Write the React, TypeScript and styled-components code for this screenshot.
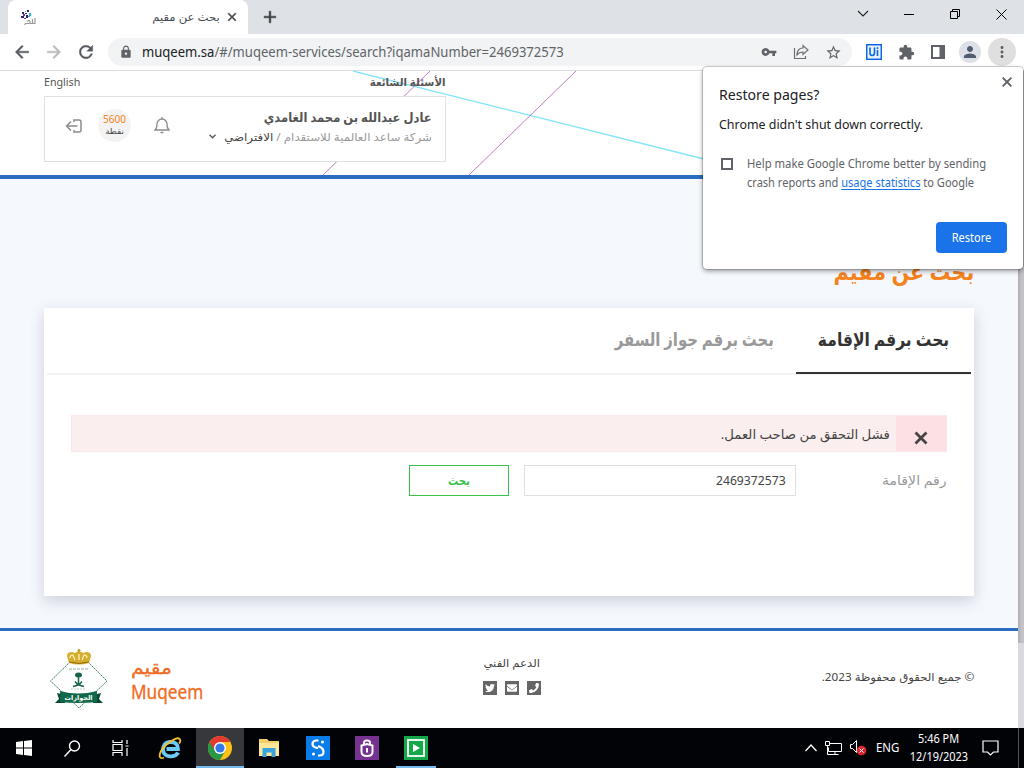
import React from "react";
import styled, { createGlobalStyle } from "styled-components";
import {
  MdArrowBack, MdArrowForward, MdRefresh, MdLock, MdVpnKey, MdStarBorder,
  MdExtension, MdPerson, MdMoreVert, MdClose, MdAdd,
} from "react-icons/md";
import { FaTwitter, FaEnvelope, FaPhone } from "react-icons/fa";

const Global = createGlobalStyle`
  *, *::before, *::after { box-sizing: border-box; }
  html, body { margin: 0; padding: 0; overflow: hidden; }
  body { font-family: "Noto Sans", "DejaVu Sans", sans-serif; color: #444; }
  button, input { font: inherit; }
  svg { display: block; flex: none; }
`;

const Screen = styled.div`
  position: relative;
  display: flex;
  flex-direction: column;
  width: 1024px;
  height: 768px;
  overflow: hidden;
  background: #fff;
`;

/* One line of text; $sx condenses or widens the letters, $from is the edge that stays put. */
const Line = styled.span<{ $size: number; $sx?: number; $color?: string; $bold?: boolean; $rtl?: boolean; $lh?: number; $from?: "left" | "right" | "center" }>`
  display: inline-flex;
  flex: none;
  direction: ${(p) => (p.$rtl ? "rtl" : "ltr")};
  font-size: ${(p) => p.$size}px;
  line-height: ${(p) => p.$lh ?? 20}px;
  font-weight: ${(p) => (p.$bold ? 700 : 400)};
  color: ${(p) => p.$color ?? "inherit"};
  white-space: pre;
  transform: scaleX(${(p) => p.$sx ?? 1});
  transform-origin: ${(p) => p.$from ?? (p.$rtl ? "right" : "left")} center;
`;

/* Browser chrome */
const TabStrip = styled.div`
  display: flex;
  flex: none;
  height: 34px;
  background: #dee1e6;
`;
const Tab = styled.div`
  display: flex;
  align-items: center;
  justify-content: space-between;
  width: 240px;
  margin-left: 8px;
  padding: 0 9px 0 12px;
  border-radius: 8px 8px 0 0;
  background: #fff;
  color: #45494d;
`;
const TabEnd = styled.div`
  display: flex;
  align-items: center;
  gap: 5px;
`;
const BoldClose = styled(MdClose)`
  path:not([fill="none"]) { stroke: currentColor; stroke-width: 1px; }
`;
const NewTab = styled.div`
  display: flex;
  align-items: center;
  margin-left: 12px;
  color: #3c4043;
  path:not([fill="none"]) { stroke: currentColor; stroke-width: 0.6px; }
`;
const WindowControls = styled.div`
  display: flex;
  align-items: center;
  margin-left: auto;
  height: 28px;
`;
const WindowButton = styled.div`
  display: flex;
  justify-content: center;
  width: 46px;
`;
const Toolbar = styled.div`
  display: flex;
  flex: none;
  align-items: center;
  height: 37px;
  padding: 0 8px 0 12px;
  border-bottom: 1px solid #dadce0;
  color: #5f6368;
`;
const NavIcons = styled.div`
  display: flex;
  gap: 12px;
  color: #55595e;
  path:not([fill="none"]) { stroke: currentColor; stroke-width: 0.5px; }
`;
const Omnibox = styled.div`
  display: flex;
  align-items: center;
  width: 744px;
  height: 28px;
  margin-left: 12px;
  padding: 0 10px 0 11px;
  border-radius: 14px;
  background: #f1f3f4;
`;
const Url = styled.div`
  display: flex;
  width: 430px;
  margin-left: 9px;
  b { font-weight: 400; color: #202124; }
`;
const OmniActions = styled.div`
  display: flex;
  align-items: center;
  gap: 16px;
  margin-left: auto;
`;
const ToolActions = styled.div`
  display: flex;
  align-items: center;
  margin-left: 14px;
  gap: 16px;
`;
const Avatar = styled.div`
  display: grid;
  place-items: center;
  width: 22px;
  height: 22px;
  margin-left: -2px;
  border-radius: 50%;
  background: #dde0e7;
  color: #525c70;
`;
const MenuDots = styled.div`
  display: grid;
  place-items: center;
  width: 28px;
  height: 28px;
  margin-left: -9px;
  border-radius: 50%;
  background: #dfdfdf;
`;

/* Web page */
const Viewport = styled.div`
  display: flex;
  flex: none;
  height: 657px;
`;
const Page = styled.div`
  display: flex;
  flex-direction: column;
  width: 1018px;
  background: #f5f8fd;
`;
const Scrollbar = styled.div`
  width: 6px;
  background: #d9dade;
`;
const Thumb = styled.div`
  height: 572px;
  background: linear-gradient(90deg, #aeaeb2, #c2c2c7 60%);
`;
const Header = styled.header`
  position: relative;
  height: 108px;
  flex: none;
  padding: 1px 0 0 44px;
  border-bottom: 4px solid #2a6cbf;
  background: #fff;
`;
const HeaderLines = styled.svg`
  position: absolute;
  top: 0;
  left: 320px;
`;
const HeaderColumn = styled.div`
  position: relative;
  width: 402px;
`;
const TopLinks = styled.div`
  display: flex;
  align-items: center;
  justify-content: space-between;
  height: 24px;
  padding-bottom: 4px;
  color: #555;
`;
const ProfileCard = styled.div`
  display: flex;
  align-items: center;
  height: 66px;
  padding: 0 13px 0 20px;
  border: 1px solid #e0e0e0;
  background: #fff;
  color: #999;
`;
const ProfileIcons = styled.div`
  display: flex;
  align-items: center;
  gap: 15px;
  padding-bottom: 7px;
`;
const Points = styled.div`
  display: flex;
  flex-direction: column;
  align-items: center;
  width: 33px;
  height: 33px;
  padding-top: 4px;
  border-radius: 50%;
  background: #f3f3f3;
`;
const Bell = styled.svg`
  margin-left: 8px;
`;
const ProfileText = styled.div`
  display: flex;
  flex-direction: column;
  align-items: flex-end;
  margin-left: auto;
  padding-bottom: 5px;
`;
const Company = styled.div`
  display: flex;
  align-items: center;
  gap: 23px;
  b { font-weight: 400; color: #444; }
`;
const Main = styled.main`
  display: flex;
  flex-direction: column;
  height: 449px;
  padding: 76px 44px 0;
`;
const PageTitle = styled.h1`
  display: flex;
  justify-content: flex-end;
  height: 53px;
  margin: 0;
  line-height: 32px;
`;
const Card = styled.section`
  height: 288px;
  padding: 0 3px;
  background: #fff;
  box-shadow: 0 5px 14px rgba(60, 70, 90, 0.22);
`;
const Tabs = styled.div`
  display: flex;
  flex-direction: row-reverse;
  height: 67px;
  border-bottom: 2px solid #f2f2f2;
`;
const SearchTab = styled.div<{ $active?: boolean }>`
  height: 66px;
  width: ${(p) => (p.$active ? 175 : 205)}px;
  padding: 15px 22px 0;
  text-align: right;
  direction: rtl;
  border-bottom: ${(p) => (p.$active ? "2px solid #333" : "none")};
`;
const Body = styled.div`
  padding: 40px 24px 0;
`;
const Alert = styled.div`
  display: flex;
  flex-direction: row-reverse;
  align-items: center;
  height: 37px;
  border: 1px solid #fae7e8;
  background: #faeeee;
`;
const AlertClose = styled.div`
  display: grid;
  place-items: center;
  width: 50px;
  height: 35px;
  padding-top: 9px;
  margin-left: 6px;
  background: #fde0e4;
`;
const FormRow = styled.div`
  display: flex;
  flex-direction: row-reverse;
  align-items: center;
  margin-top: 13px;
`;
const Label = styled.label`
  display: flex;
  justify-content: flex-end;
  width: 151px;
  padding-bottom: 1px;
`;
const Field = styled.div`
  display: flex;
  align-items: center;
  justify-content: flex-end;
  width: 272px;
  height: 31px;
  padding-right: 9px;
  border: 1px solid #e0e0e0;
`;
const SearchButton = styled.button`
  display: flex;
  align-items: center;
  justify-content: center;
  width: 100px;
  height: 31px;
  margin-right: 15px;
  padding: 0;
  border: 1px solid #3cc14b;
  background: #fff;
`;
const Footer = styled.footer`
  display: flex;
  flex: 1;
  justify-content: space-between;
  padding: 17px 44px 0 49px;
  border-top: 3px solid #2a6cbf;
  background: #fff;
`;
const Brand = styled.div`
  display: flex;
  gap: 23px;
  width: 300px;
`;
const BrandText = styled.div`
  display: flex;
  flex-direction: column;
  align-items: flex-start;
  padding-top: 7px;
  -webkit-text-stroke: 0.3px #f26a21;
`;
const Support = styled.div`
  display: flex;
  flex-direction: column;
  align-items: center;
  gap: 8px;
  padding: 5px 0 0 1px;
`;
const Socials = styled.div`
  display: flex;
  gap: 8px;
`;
const Social = styled.span`
  display: grid;
  place-items: center;
  width: 14px;
  height: 14px;
  background: #666;
  color: #fff;
`;
const Copyright = styled.div`
  display: flex;
  justify-content: flex-end;
  width: 300px;
  padding-top: 19px;
`;

/* Restore dialog floating above the page */
const Popup = styled.div`
  position: absolute;
  top: 67px;
  left: 703px;
  width: 320px;
  height: 202px;
  padding: 16px 16px 16px;
  border-radius: 4px;
  background: #fff;
  box-shadow: 0 0 0 1px rgba(0, 0, 0, 0.16), 0 2px 5px rgba(0, 0, 0, 0.4);
  display: flex;
  flex-direction: column;
  align-items: flex-start;
  gap: 9px;
  color: #202124;
`;
const PopupClose = styled.div`
  position: absolute;
  top: 7px;
  right: 8px;
  color: #5f6368;
`;
const HelpRow = styled.div`
  display: flex;
  gap: 14px;
  margin-top: 11px;
  padding-left: 2px;
  color: #5f6368;
`;
const Check = styled.span`
  width: 12px;
  height: 12px;
  margin-top: 4px;
  border: 2px solid #5f6368;
`;
const HelpText = styled.div`
  display: flex;
  flex-direction: column;
  align-items: flex-start;
  u { color: #1a73e8; text-underline-offset: 2px; }
`;
const RestoreButton = styled.div`
  display: flex;
  align-items: center;
  justify-content: center;
  align-self: flex-end;
  width: 71px;
  height: 31px;
  margin-top: auto;
  border-radius: 4px;
  background: #1a73e8;
  color: #fff;
`;

/* Taskbar */
const Taskbar = styled.div`
  display: flex;
  flex: none;
  height: 40px;
  background: #020307;
  color: #fff;
`;
const Task = styled.div<{ $w: number; $active?: boolean; $open?: boolean }>`
  display: flex;
  align-items: center;
  justify-content: center;
  width: ${(p) => p.$w}px;
  height: 40px;
  background: ${(p) => (p.$active ? "#37383b" : "transparent")};
  box-shadow: ${(p) => (p.$open ? "inset 0 -2px #76b9ed" : "none")};
`;
const Tray = styled.div`
  display: flex;
  align-items: center;
  margin-left: auto;
`;
const TrayIcons = styled.div`
  display: flex;
  align-items: center;
  gap: 8px;
  margin-right: 9px;
`;
const Clock = styled.div`
  display: flex;
  flex-direction: column;
  align-items: center;
  width: 60px;
  margin: 0 13px 0 8px;
`;
const ShowDesktop = styled.div`
  width: 6px;
  height: 40px;
  margin-left: 19px;
  border-left: 1px solid #555;
`;

const Favicon = () => (
  <svg width="17" height="17" viewBox="0 0 17 17">
    <g fill="#33206f"><rect x="2" y="3" width="2" height="2" /><rect x="5" y="4" width="2" height="1" /><rect x="7" y="1" width="2" height="2" /><rect x="1" y="7" width="3" height="2" /><rect x="6" y="6" width="2" height="3" /></g>
    <g fill="#6b3aa0"><rect x="3" y="5" width="2" height="2" /><rect x="4" y="9" width="2" height="1" /></g>
    <g fill="#19b5e8"><rect x="9" y="4" width="2" height="3" /><rect x="5" y="2" width="1" height="1" /><rect x="8" y="7" width="2" height="1" /></g>
    <path d="M5 14.500h10V9M12.500 10v4M7 12.500q2-2 3 0v2M5 14.500v1.500" stroke="#9a9a9a" fill="none" strokeWidth="1.200" />
  </svg>
);

const Emblem = () => (
  <svg width="59" height="61" viewBox="0 0 59 61">
    <path d="M21 14 1.500 33 30 60 58 33 39 14" fill="none" stroke="#4c8770" strokeWidth="1" strokeDasharray="2 .6" />
    <path d="M20 15 18 8q0-4 5-4l3 1 4-2 4 2 3-1q5 0 5 4l-2 7q-10 3-20 0z" fill="#d8ad2d" />
    <path d="M21 10q0-3 3-3l2 5M38 10q0-3-3-3l-2 5M30 6v6" fill="none" stroke="#fff5c7" strokeWidth="1.200" />
    <path d="M20 14q10 3 20 0" fill="none" stroke="#8e6c15" />
    <circle cx="30" cy="2.500" r="1.500" fill="#c49b22" />
    <path d="M20 21h19" stroke="#c9d6cf" strokeWidth="2" strokeDasharray="3 1" />
    <path d="M29.500 28v8" stroke="#176548" strokeWidth="1.500" />
    <ellipse cx="29.500" cy="27" rx="3.500" ry="2.500" fill="#176548" />
    <path d="M24 38.500q6-1 9-5M35 38.500q-6-1-9-5" fill="none" stroke="#176548" strokeWidth="1.400" />
    <path d="M22 41h15" stroke="#bcccc4" strokeWidth="1" strokeDasharray="2 1" />
    <path d="M8 45 16 47V55L6 55 10 51zM52 45 44 47V55L54 55 50 51z" fill="#0c4935" />
    <path d="M11 43q18 5 37 0v11q-18 2-37 0z" fill="#12694a" />
    <text x="29.500" y="52" textAnchor="middle" fontSize="6.500" fontWeight="700" fill="#fff" fontFamily="DejaVu Sans, sans-serif">الجوازات</text>
  </svg>
);

const Chrome = () => (
  <svg width="24" height="24" viewBox="0 0 24 24">
    <circle cx="12" cy="12" r="12" fill="#fbc116" />
    <path d="M1.600 6A12 12 0 0 0 12 24l5.200-9L12 12z" fill="#279847" />
    <path d="M1.600 6A12 12 0 0 1 22.400 6H12L7 15z" fill="#e33b2e" />
    <circle cx="12" cy="12" r="6" fill="#fff" />
    <circle cx="12" cy="12" r="4.600" fill="#3479e5" />
  </svg>
);

const Explorer = () => (
  <svg width="24" height="24" viewBox="0 0 24 24" fill="none">
    <path d="M20 16.500C18 21 9.500 22 6.200 17.500 3.500 13.500 5.500 6.500 12 6c5.500-.3 8.300 3 8 7H8.500" stroke="#6bcbf5" strokeWidth="3.800" />
    <path d="M6 21.500C-1 24.500 1 15 8 9c6-5.500 12.500-8.500 14-5.500.6 1.300 0 3-1 4" stroke="#f2c02d" strokeWidth="1.800" />
  </svg>
);

export default function App() {
  return (
    <Screen>
      <Global />
      <TabStrip>
        <Tab>
          <Favicon />
          <TabEnd>
            <Line $size={11} $sx={1.06} $rtl>بحث عن مقيم</Line>
            <BoldClose size={14} />
          </TabEnd>
        </Tab>
        <NewTab><MdAdd size={20} /></NewTab>
        <WindowControls>
          <WindowButton><svg width="12" height="8" viewBox="0 0 12 8"><path d="m1 1 5 5 5-5" fill="none" stroke="#222" strokeWidth="1.100" /></svg></WindowButton>
          <WindowButton><svg width="10" height="10"><path d="M0 5.500h10" stroke="#000" /></svg></WindowButton>
          <WindowButton><svg width="10" height="10"><path d="M.5 2.500h7v7h-7zM2.500 2.500v-2h7v7h-2" fill="none" stroke="#000" /></svg></WindowButton>
          <WindowButton><svg width="11" height="11"><path d="m.5.5 10 10M10.500.5l-10 10" stroke="#000" /></svg></WindowButton>
        </WindowControls>
      </TabStrip>
      <Toolbar>
        <NavIcons>
          <MdArrowBack size={20} />
          <MdArrowForward size={20} color="#b8babc" />
          <MdRefresh size={20} />
        </NavIcons>
        <Omnibox>
          <MdLock size={14} />
          <Url><Line $size={14} $sx={0.934}><b>muqeem.sa</b>/#/muqeem-services/search?iqamaNumber=2469372573</Line></Url>
          <OmniActions>
            <MdVpnKey size={16} />
            <svg width="16" height="16" viewBox="0 0 16 16" fill="none" stroke="#6b6f74" strokeWidth="1.200"><path d="M1.500 4v10.500h11V12M4 11c0-5 3-7 6-7V1.500l5 4.500-5 4.500V8C7 8 5.500 9 4 11z" /></svg>
            <MdStarBorder size={17} />
          </OmniActions>
        </Omnibox>
        <ToolActions>
          <svg width="16" height="16" viewBox="0 0 16 16"><rect width="16" height="16" fill="#0b67df" /><rect x="1.500" y="1.500" width="13" height="13" fill="#fff" /><rect x="2" y="2" width="12" height="12" fill="#e8f1fd" /><path d="M4 3.500v5.500q0 2.500 2.200 2.500T8.500 9V3.500M11.500 6v6M11.500 3.300v1.700" stroke="#0b67df" strokeWidth="1.600" fill="none" /></svg>
          <MdExtension size={17} />
          <svg width="14" height="14"><path d="M1 1h12v12H1z" stroke="#5f6368" strokeWidth="2" fill="none" /><path d="M8.500 1H13v12H8.500z" fill="#5f6368" /></svg>
          <Avatar><MdPerson size={18} /></Avatar>
          <MenuDots><MdMoreVert size={18} /></MenuDots>
        </ToolActions>
      </Toolbar>

      <Viewport>
        <Page>
          <Header>
            <HeaderLines width="400" height="104" viewBox="320 71 400 104" fill="none">
              <path d="M353 71 720 163" stroke="#82e2fa" strokeWidth="1.300" />
              <path d="M576 71 469 175M430 71 323 175" stroke="#c27abf" strokeWidth="1" />
            </HeaderLines>
            <HeaderColumn>
              <TopLinks>
                <Line $size={11} $sx={0.97}>English</Line>
                <Line $size={11} $sx={0.93} $bold $rtl>الأسئلة الشائعة</Line>
              </TopLinks>
              <ProfileCard>
                <ProfileIcons>
                  <svg width="18" height="14" viewBox="0 0 18 14" fill="none" stroke="#8c8c8c" strokeWidth="1.500"><path d="M6 2.500 1.500 7 6 11.500M1.500 7h11M9 3V1h5q2 0 2 2v8q0 2-2 2H9v-2" /></svg>
                  <Points>
                    <Line $size={10} $lh={12} $color="#f58220">5600</Line>
                    <Line $size={8} $lh={12} $color="#444" $sx={1.1} $from="center" $rtl>نقطة</Line>
                  </Points>
                  <Bell width="16" height="17" viewBox="0 0 16 17" fill="none" stroke="#8c8c8c" strokeWidth="1.300"><path d="M1 13c2-1.500 2-3 2-6a5 5 0 0 1 10 0c0 3 0 4.500 2 6zM8 2V0M6.500 15.500h3" /></Bell>
                </ProfileIcons>
                <ProfileText>
                  <Line $size={13} $sx={0.89} $bold $color="#555" $rtl $lh={20}>عادل عبدالله بن محمد الغامدي</Line>
                  <Company>
                    <svg width="7" height="5" viewBox="0 0 7 5"><path d="m.5.8 3 3 3-3" fill="none" stroke="#555" strokeWidth="1.300" /></svg>
                    <Line $size={11} $sx={1.077} $rtl>شركة ساعد العالمية للاستقدام / <b>الافتراضي</b></Line>
                  </Company>
                </ProfileText>
              </ProfileCard>
            </HeaderColumn>
          </Header>
          <Main>
            <PageTitle><Line $size={23} $sx={0.9} $lh={32} $bold $rtl $color="#f58220">بحث عن مقيم</Line></PageTitle>
            <Card>
              <Tabs>
                <SearchTab $active><Line $size={18} $sx={0.863} $lh={32} $bold $rtl $color="#333">بحث برقم الإقامة</Line></SearchTab>
                <SearchTab><Line $size={18} $sx={0.825} $lh={32} $bold $rtl $color="#999">بحث برقم جواز السفر</Line></SearchTab>
              </Tabs>
              <Body>
                <Alert>
                  <AlertClose><svg width="14" height="14"><path d="m1.500 1.500 11 11M12.500 1.500l-11 11" stroke="#444" strokeWidth="2.800" /></svg></AlertClose>
                  <Line $size={13} $sx={1.02} $rtl>فشل التحقق من صاحب العمل.</Line>
                </Alert>
                <FormRow>
                  <Label><Line $size={13} $sx={1.085} $rtl $color="#999">رقم الإقامة</Line></Label>
                  <Field><Line $size={12} $sx={1.015} $from="right">2469372573</Line></Field>
                  <SearchButton><Line $size={12} $sx={0.85} $from="center" $bold $rtl $color="#3cc14b">بحث</Line></SearchButton>
                </FormRow>
              </Body>
            </Card>
          </Main>
          <Footer>
            <Brand>
              <Emblem />
              <BrandText>
                <Line $size={18} $sx={1.13} $from="left" $lh={24} $rtl $color="#f26a21">مقيم</Line>
                <Line $size={20} $sx={0.86} $lh={25} $color="#f26a21">Muqeem</Line>
              </BrandText>
            </Brand>
            <Support>
              <Line $size={11} $sx={1.06} $from="center" $rtl>الدعم الفني</Line>
              <Socials>
                <Social><FaTwitter size={10} /></Social>
                <Social><FaEnvelope size={10} /></Social>
                <Social><FaPhone size={10} /></Social>
              </Socials>
            </Support>
            <Copyright><Line $size={11} $sx={1.065} $rtl>© جميع الحقوق محفوظة 2023.</Line></Copyright>
          </Footer>
        </Page>
        <Scrollbar><Thumb /></Scrollbar>
      </Viewport>

      <Popup>
        <PopupClose><BoldClose size={16} /></PopupClose>
        <Line $size={15} $sx={0.94} $lh={22}>Restore pages?</Line>
        <Line $size={13} $sx={0.955} $lh={20}>Chrome didn't shut down correctly.</Line>
        <HelpRow>
          <Check />
          <HelpText>
            <Line $size={12} $sx={0.94} $lh={19}>Help make Google Chrome better by sending</Line>
            <Line $size={12} $sx={0.92} $lh={19}>crash reports and <u>usage statistics</u> to Google</Line>
          </HelpText>
        </HelpRow>
        <RestoreButton><Line $size={12} $sx={0.92} $from="center">Restore</Line></RestoreButton>
      </Popup>

      <Taskbar>
        <Task $w={48}><svg width="16" height="16"><path d="M0 2 7 1v6.500H0zM8 1l8-1v7.500H8zM0 8.500h7V15l-7-1zM8 8.500h8V16l-8-1z" fill="#fff" /></svg></Task>
        <Task $w={48}><svg width="17" height="17" fill="none" stroke="#fff" strokeWidth="1.400"><circle cx="10.500" cy="6" r="5" /><path d="m7 9.500-6.500 7" /></svg></Task>
        <Task $w={48}><svg width="17" height="16" fill="none" stroke="#fff" strokeWidth="1.200"><path d="M1 0v2.500h9V0M1 4.500h9v6H1zM1 16v-3.500h9V16M15 0v4M15 8v8M13.500 6h3" /></svg></Task>
        <Task $w={52}><Explorer /></Task>
        <Task $w={48} $active $open><Chrome /></Task>
        <Task $w={50}>
          <svg width="22" height="20"><path d="M1 1h8l2 2h10v15H1z" fill="#f4cf69" /><path d="M1 5h20v13H1z" fill="#ffe698" /><path d="M4.500 19v-9h13v9h-4v-4.500h-5V19z" fill="#37a4df" /></svg>
        </Task>
        <Task $w={48}>
          <svg width="24" height="24" fill="none"><rect width="24" height="24" fill="#087ce7" /><path d="M12.500 4.500H10Q6.500 5 6.500 8q0 2.500 3 3.500l2.500.8M12 10l3 1.500q2.500 1.500 2.500 4.500 0 3.500-4 3.500H12" stroke="#fff" strokeWidth="2.200" /><circle cx="16.500" cy="6" r="1.500" fill="#fff" /><circle cx="7.500" cy="18" r="1.500" fill="#fff" /></svg>
        </Task>
        <Task $w={50}>
          <svg width="24" height="24" fill="none" stroke="#fff" strokeWidth="2"><rect width="24" height="24" fill="#753291" stroke="none" /><path d="M9 8V6.500Q9 4.500 12 4.500t3 2V8M6.500 9.500 12 8l5.500 1.500V16q0 4-5.500 4t-5.500-4z" /><path d="M12 12v4.500" /></svg>
        </Task>
        <Task $w={48}>
          <Task $w={40} $open>
            <svg width="24" height="24"><rect width="24" height="24" fill="#14a849" /><rect x="4" y="4" width="16" height="16" fill="none" stroke="#fff" strokeWidth="1.800" /><path d="m9 8 7 4-7 4z" fill="#fff" /></svg>
          </Task>
        </Task>
        <Tray>
          <TrayIcons>
            <svg width="12" height="8" fill="none" stroke="#fff" strokeWidth="1.300"><path d="m.5 7 5.500-6 5.500 6" /></svg>
            <svg width="17" height="15" fill="none" stroke="#fff"><path d="M5 2.500h11.500v8H3.500v-4M.5.5h4v4h-4zM2.500 4.500v9h5M10 10.500v3M6.500 13.500h7" /></svg>
            <svg width="17" height="16" fill="none" stroke="#fff"><path d="M.5 4.500h2l4-4v12l-4-4h-2z" /><circle cx="11.500" cy="10.500" r="4.800" fill="#d92631" stroke="none" /><path d="m9.500 8.500 4 4M13.500 8.500l-4 4" /></svg>
          </TrayIcons>
          <Line $size={12} $sx={0.95}>ENG</Line>
          <Clock>
            <Line $size={12} $sx={0.91} $from="center" $lh={18}>5:46 PM</Line>
            <Line $size={12} $sx={0.91} $from="center" $lh={18}>12/19/2023</Line>
          </Clock>
          <svg width="17" height="16" fill="none" stroke="#fff" strokeWidth="1.200"><path d="M1 1h15v11h-4.500L8.500 15l-3-3H1z" /></svg>
          <ShowDesktop />
        </Tray>
      </Taskbar>
    </Screen>
  );
}
